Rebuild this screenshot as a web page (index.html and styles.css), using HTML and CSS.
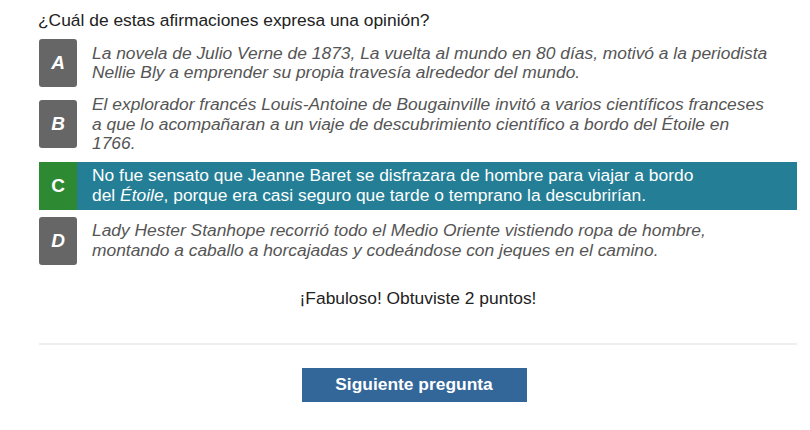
FILE: index.html
```html
<!DOCTYPE html>
<html lang="es">
<head>
<meta charset="utf-8">
<link rel="stylesheet" href="styles.css">
</head>
<body>
<div class="quiz">
  <p class="question">¿Cuál de estas afirmaciones expresa una opinión?</p>
  <div class="options">
    <div class="option">
      <span class="letter">A</span>
      <span class="text">La novela de Julio Verne de 1873, La vuelta al mundo en 80 días, motivó a la periodista<br>Nellie Bly a emprender su propia travesía alrededor del mundo.</span>
    </div>
    <div class="option">
      <span class="letter">B</span>
      <span class="text">El explorador francés Louis-Antoine de Bougainville invitó a varios científicos franceses<br>a que lo acompañaran a un viaje de descubrimiento científico a bordo del Étoile en<br>1766.</span>
    </div>
    <div class="option selected">
      <span class="letter">C</span>
      <span class="text">No fue sensato que Jeanne Baret se disfrazara de hombre para viajar a bordo<br>del <em>Étoile</em>, porque era casi seguro que tarde o temprano la descubrirían.</span>
    </div>
    <div class="option">
      <span class="letter">D</span>
      <span class="text">Lady Hester Stanhope recorrió todo el Medio Oriente vistiendo ropa de hombre,<br>montando a caballo a horcajadas y codeándose con jeques en el camino.</span>
    </div>
  </div>
  <p class="feedback">¡Fabuloso! Obtuviste 2 puntos!</p>
  <hr class="divider">
  <div class="actions">
    <button class="next">Siguiente pregunta</button>
  </div>
</div>
</body>
</html>
```

FILE: styles.css
```css
html, body {
  margin: 0;
  padding: 0;
  background: #fff;
}
body {
  font-family: "Liberation Sans", Arial, sans-serif;
  font-size: 17.4px;
  color: #222;
}
.quiz {
  width: 758px;
  padding: 11px 0 0 39px;
}
.question {
  margin: 0 0 9px -1px;
  line-height: 19px;
  color: #222;
}
.options {
  display: flex;
  flex-direction: column;
  gap: 7px;
}
.option {
  display: flex;
  align-items: center;
  gap: 15px;
}
.letter {
  flex: 0 0 38px;
  height: 48px;
  border-radius: 3px;
  background: #666;
  color: #fff;
  font-weight: bold;
  font-style: italic;
  font-size: 19px;
  display: flex;
  align-items: center;
  justify-content: center;
}
.text {
  font-style: italic;
  color: #555;
  line-height: 19.5px;
  padding: 1px 0;
}
.selected {
  background: #237e96;
}
.selected .letter {
  background: #2e8a32;
  border-radius: 0;
  font-style: normal;
}
.selected .text {
  color: #fff;
  font-style: normal;
}
.selected .text em {
  font-style: italic;
}
.feedback {
  margin: 24px 0 0;
  text-align: center;
  line-height: 19px;
  color: #222;
}
.divider {
  margin: 35px 0 0;
  border: 0;
  border-top: 2px solid #eee;
}
.actions {
  display: flex;
  justify-content: center;
  padding-top: 23px;
}
.next {
  width: 225px;
  height: 34px;
  margin-left: -8px;
  border: 0;
  border-radius: 0;
  background: #336699;
  color: #fff;
  font-family: "Liberation Sans", Arial, sans-serif;
  font-size: 17.4px;
  font-weight: bold;
}
```
